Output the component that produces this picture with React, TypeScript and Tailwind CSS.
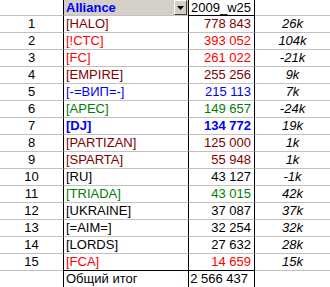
import React from "react";

type Row = { n: number; name: string; val: string; d: string; c: string; bold?: boolean };

const DR = "text-[#800000]";
const R = "text-[#ff0000]";
const B = "text-[#0000ff]";
const G = "text-[#008000]";
const K = "text-black";

const rows: Row[] = [
  { n: 1, name: "[HALO]", val: "778 843", d: "26k", c: DR },
  { n: 2, name: "[!CTC]", val: "393 052", d: "104k", c: R },
  { n: 3, name: "[FC]", val: "261 022", d: "-21k", c: R },
  { n: 4, name: "[EMPIRE]", val: "255 256", d: "9k", c: DR },
  { n: 5, name: "[-=ВИП=-]", val: "215 113", d: "7k", c: B },
  { n: 6, name: "[APEC]", val: "149 657", d: "-24k", c: G },
  { n: 7, name: "[DJ]", val: "134 772", d: "19k", c: B, bold: true },
  { n: 8, name: "[PARTIZAN]", val: "125 000", d: "1k", c: DR },
  { n: 9, name: "[SPARTA]", val: "55 948", d: "1k", c: DR },
  { n: 10, name: "[RU]", val: "43 127", d: "-1k", c: K },
  { n: 11, name: "[TRIADA]", val: "43 015", d: "42k", c: G },
  { n: 12, name: "[UKRAINE]", val: "37 087", d: "37k", c: K },
  { n: 13, name: "[=AIM=]", val: "32 254", d: "32k", c: K },
  { n: 14, name: "[LORDS]", val: "27 632", d: "28k", c: K },
  { n: 15, name: "[FCA]", val: "14 659", d: "15k", c: R },
];

export default function App() {
  return (
    <div
      className="w-[330px] h-[287px] overflow-hidden bg-white text-[13px] leading-[16px] text-black"
      style={{ fontFamily: '"Liberation Sans", Arial, sans-serif' }}
    >
      {/* header */}
      <div className="flex h-[16px]">
        <div className="w-[63px] shrink-0 border-b border-[#c0c0c0]" />
        <div className="w-[125px] shrink-0 border-l border-black border-b border-b-[#c0c0c0] bg-[#d4d0c8] flex items-start">
          <span className="pl-[2px] font-bold text-[#0000ff] leading-[15px] flex-1">Alliance</span>
          <div className="mt-[0px] mr-[1px] w-[13px] h-[15px] bg-[#d4d0c8] border-t border-l border-t-white border-l-white border-r border-b border-r-[#404040] border-b-[#404040] flex items-center justify-center">
            <svg width="7" height="4" viewBox="0 0 7 4">
              <polygon points="0,0 7,0 3.5,4" fill="#000" />
            </svg>
          </div>
        </div>
        <div className="w-[67px] shrink-0 border-l border-r border-black border-b border-b-black pl-[2px] leading-[15px]">
          2009_w25
        </div>
        <div className="flex-1 border-b border-[#c0c0c0]" />
      </div>
      {rows.map((r) => (
        <div key={r.n} className="flex h-[17px]">
          <div className="w-[63px] shrink-0 border-b border-[#c0c0c0] text-center leading-[16px]">{r.n}</div>
          <div
            className={`w-[125px] shrink-0 border-l border-black border-b ${
              r.n === 15 ? "border-b-black" : "border-b-[#c0c0c0]"
            } pl-[2px] leading-[16px] ${r.c} ${r.bold ? "font-bold" : ""}`}
          >
            {r.name}
          </div>
          <div
            className={`w-[67px] shrink-0 border-l border-r border-black border-b ${
              r.n === 15 ? "border-b-black" : "border-b-[#c0c0c0]"
            } pr-[3px] text-right leading-[16px] ${r.c} ${r.bold ? "font-bold" : ""}`}
          >
            {r.val}
          </div>
          <div className="flex-1 border-b border-[#c0c0c0] text-center italic leading-[16px]">{r.d}</div>
        </div>
      ))}
      <div className="flex h-[17px]">
        <div className="w-[63px] shrink-0" />
        <div className="w-[125px] shrink-0 border-l border-black pl-[2px] leading-[16px]">Общий итог</div>
        <div className="w-[67px] shrink-0 border-l border-r border-black pr-[6px] text-right leading-[16px]">2 566 437</div>
        <div className="flex-1" />
      </div>
    </div>
  );
}
